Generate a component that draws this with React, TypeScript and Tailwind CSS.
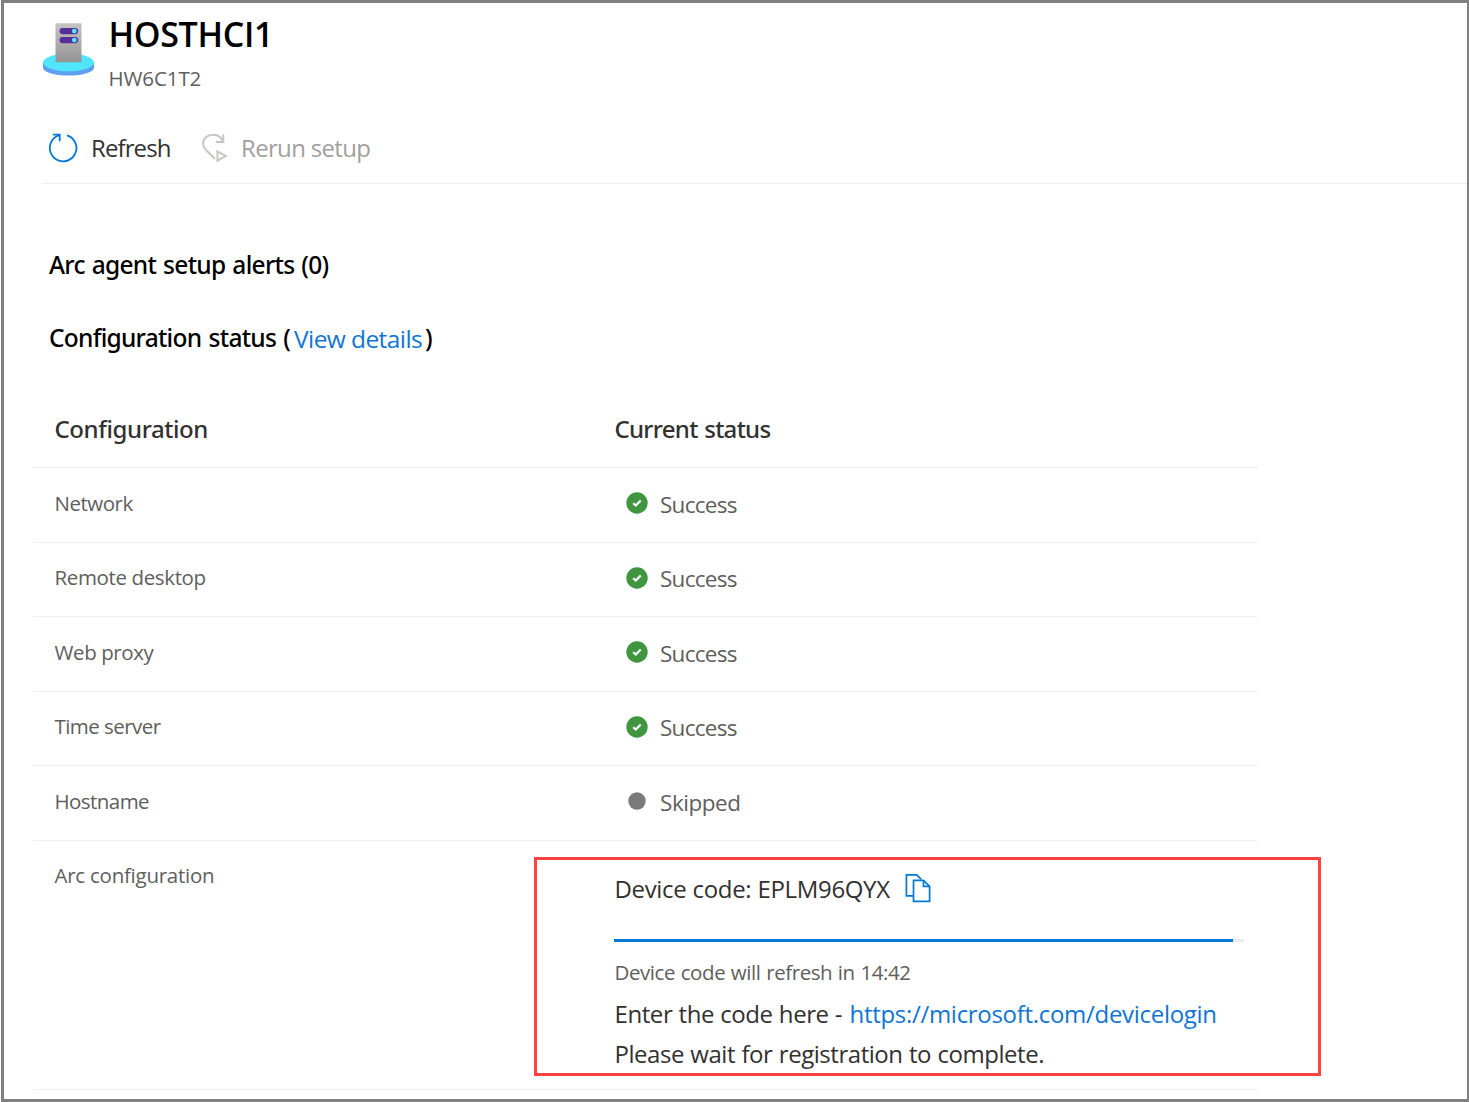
import React from "react";

function ServerIcon() {
  return (
    <svg width="52" height="56" viewBox="0 0 52 56" className="mt-[10px] shrink-0">
      <defs>
        <linearGradient id="tower" x1="0" y1="0" x2="0" y2="1">
          <stop offset="0" stopColor="#c4c4c4" />
          <stop offset="1" stopColor="#949494" />
        </linearGradient>
      </defs>
      <path d="M0 40.500v5c0 4.600 11.400 8.100 25.500 8.100s25.500-3.500 25.500-8.100v-5z" fill="#5ea0ef" />
      <ellipse cx="25.500" cy="40.500" rx="25.500" ry="8.800" fill="#50e6ff" />
      <rect x="12.500" y="1.300" width="26" height="39" rx="0.700" fill="url(#tower)" />
      <rect x="16.500" y="6" width="18.700" height="6.200" rx="3.100" fill="#552f99" />
      <rect x="16.500" y="15" width="18.700" height="6.200" rx="3.100" fill="#552f99" />
      <circle cx="31.300" cy="9.100" r="2.400" fill="#50e6ff" />
      <circle cx="31.300" cy="18.100" r="2.400" fill="#50e6ff" />
    </svg>
  );
}

function RefreshIcon() {
  return (
    <svg width="30" height="30" viewBox="0 0 30 30" fill="none" stroke="#0078d4" strokeWidth="1.800">
      <path d="M19 2.300A13.300 13.300 0 1 1 11.600 2.200" />
      <path d="M4.900 1.700H11.700V8.200" />
    </svg>
  );
}

function RerunIcon() {
  return (
    <svg width="28" height="30" viewBox="0 0 28 30" fill="none" stroke="#c8c6c4" strokeWidth="2">
      <path d="M22 9C20.500 4.200 17 1.800 12.300 1.800C6.300 1.800 2 5.500 2 10.400C2 13 3 14.900 4.800 16.800L14 26" />
      <path d="M14.800 9H22.300V1.300" />
      <path d="M16.400 18.300L24.700 23L16.400 27.700Z" />
    </svg>
  );
}

function CopyIcon() {
  return (
    <svg width="26" height="30" viewBox="0 0 26 30" fill="none" stroke="#0078d4" strokeWidth="1.700" className="ml-[16px]">
      <path d="M8 22.800H1.400V1.900H11.700L16.200 6.400" />
      <path d="M8.500 7.400H18.500L24.600 13.300V28.300H8.500Z" />
      <path d="M18.500 7.400V13.300H24.600" />
    </svg>
  );
}

function StatusIcon({ done }: { done: boolean }) {
  return (
    <svg width="22" height="22" viewBox="0 0 22 22">
      {done ? (
        <>
          <circle cx="11" cy="11" r="10.700" fill="#3f9540" />
          <path d="M7.200 11.200L9.800 13.500L14.700 8.400" fill="none" stroke="#fff" strokeWidth="2.200" />
        </>
      ) : (
        <circle cx="11" cy="11" r="8.700" fill="#7a7a7a" />
      )}
    </svg>
  );
}

const rows = [
  { name: "Network", status: "Success", tracking: "tracking-[-0.475px]" },
  { name: "Remote desktop", status: "Success", tracking: "tracking-[-0.37px]" },
  { name: "Web proxy", status: "Success", tracking: "tracking-[-0.4px]" },
  { name: "Time server", status: "Success", tracking: "tracking-[-0.55px]" },
  { name: "Hostname", status: "Skipped", tracking: "tracking-[-0.55px]" },
];

export default function App() {
  return (
    <div className="h-[1102px] bg-white pl-px font-['Open_Sans',sans-serif]">
      <div className="flex h-full flex-col overflow-hidden border-[3px] border-r-2 border-[#808080]">
        <header className="flex h-[89px] pl-[39px] pt-[9px]">
          <ServerIcon />
          <div className="ml-[13.500px]">
            <h1 className="text-[34px] font-semibold leading-[44px] tracking-[-0.300px] text-black">HOSTHCI1</h1>
            <p className="mt-[8px] text-[20.500px] leading-[28px] tracking-[-0.1px] text-[#605e5c]">HW6C1T2</p>
          </div>
        </header>

        <div className="mt-[40px] flex h-[32px] items-center whitespace-nowrap pl-[44px] text-[24px] leading-[32px]">
          <RefreshIcon />
          <span className="ml-[13px] w-[110px] tracking-[-0.900px] text-[#323130]">Refresh</span>
          <RerunIcon />
          <span className="ml-[12px] tracking-[-0.670px] text-[#a19f9d]">Rerun setup</span>
        </div>
        <div className="ml-[38px] mt-[19px] h-px shrink-0 bg-[#f0efee]" />

        <section className="ml-[45px] mt-[65px] font-['Noto_Sans',sans-serif] text-[24.500px] font-medium leading-[32px] text-black">
          <h2 className="tracking-[-0.720px] [word-spacing:1.3px]">Arc agent setup alerts (0)</h2>
          <div className="mt-[41px] flex">
            <h2 className="w-[245px] whitespace-nowrap tracking-[-0.750px] [word-spacing:1.700px]">Configuration status (</h2>
            <a className="w-[131px] whitespace-nowrap pt-px font-['Open_Sans',sans-serif] font-normal tracking-[-0.578px] text-[#0f75d4]">View details</a>
            <span>)</span>
          </div>
        </section>

        <div className="ml-[29px] mt-[58px] w-[1225px]">
          <div className="grid h-[55px] grid-cols-[560px_1fr] border-b border-[#eae9e8] pl-[21.500px] font-['Noto_Sans',sans-serif] text-[24px] font-medium leading-[32px] text-[#323130]">
            <span className="tracking-[-0.400px]">Configuration</span>
            <span className="tracking-[-0.710px] [word-spacing:1px]">Current status</span>
          </div>
          {rows.map((r) => (
            <div key={r.name} className="grid h-[74.500px] grid-cols-[571px_1fr] border-b border-[#f1f0ef] pl-[21.500px] pt-[20.500px] text-[#605e5c]">
              <span className={`text-[20.500px] leading-[28px] ${r.tracking}`}>{r.name}</span>
              <span className="flex h-[30px] items-center">
                <span className="-mt-px">
                  <StatusIcon done={r.status === "Success"} />
                </span>
                <span className={`ml-[12.500px] pt-[2px] text-[22.500px] leading-[30px] ${r.status === "Success" ? "tracking-[-0.72px]" : "tracking-[-0.45px]"}`}>{r.status}</span>
              </span>
            </div>
          ))}
          <div className="relative grid h-[249.500px] grid-cols-[559.500px_1fr] whitespace-nowrap border-b border-[#f1f0ef] pl-[21.500px] text-[#323130]">
            <span className="pt-[20.500px] text-[20.500px] leading-[28px] tracking-[-0.25px] text-[#605e5c]">Arc configuration</span>
            <div className="pt-[31.500px] text-[24px] leading-[32px]">
              <div className="flex h-[32px] items-center">
                <span className="ml-[0.500px] w-[274.500px] pt-[2px] tracking-[-0.350px] [word-spacing:0.400px]">Device code: EPLM96QYX</span>
                <CopyIcon />
              </div>
              <div className="mt-[35px] h-[3px] w-[630px] bg-[#eaeaea]">
                <div className="h-full w-[619px] bg-[#0078d4]" />
              </div>
              <p className="ml-[0.500px] mt-[16px] text-[20.500px] leading-[28px] tracking-[-0.420px] [word-spacing:0.700px] text-[#605e5c]">Device code will refresh in 14:42</p>
              <p className="ml-[0.500px] mt-[12px] flex">
                <span className="w-[235px] tracking-[-0.420px] [word-spacing:0.400px]">Enter the code here -</span>
                <a className="tracking-[-0.300px] text-[#0f75d4]">https://microsoft.com/devicelogin</a>
              </p>
              <p className="ml-[0.500px] mt-[8px] tracking-[-0.470px] [word-spacing:0.700px]">Please wait for registration to complete.</p>
            </div>
            <div className="pointer-events-none absolute left-[501px] top-[16.500px] h-[219px] w-[787px] border-[3px] border-[#ff4343]" />
          </div>
        </div>
      </div>
    </div>
  );
}
